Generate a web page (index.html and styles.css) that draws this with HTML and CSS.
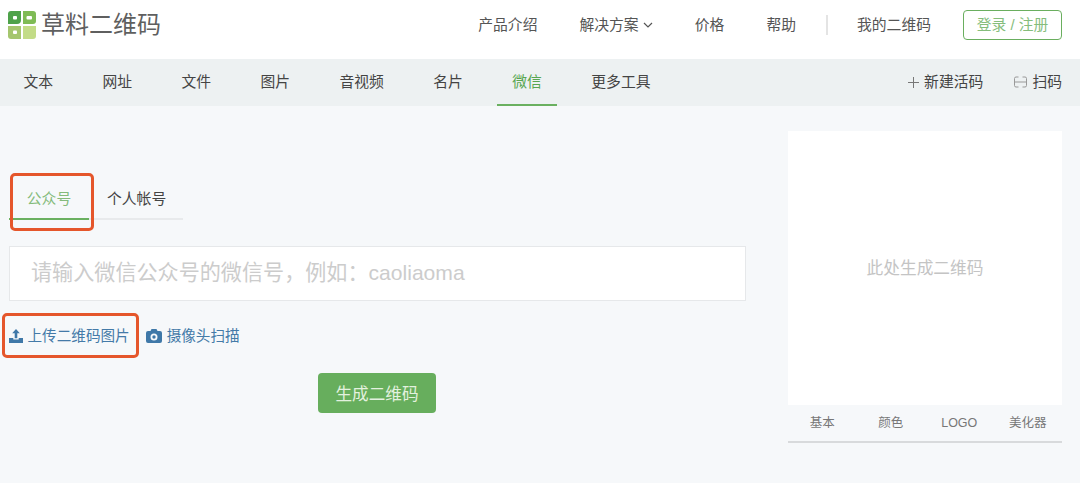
FILE: index.html
```html
<!DOCTYPE html>
<html lang="zh-CN">

<head>
  <meta charset="UTF-8">
  <title>草料二维码</title>
  <link rel="stylesheet" href="styles.css">
</head>

<body>

  <header class="topbar">
    <a class="logo" href="#">
      <svg class="logo-mark" width="28" height="28" viewBox="0 0 28 28">
        <path fill="#4ea24a" d="M3 0h10v9a4 4 0 0 1-4 4H0V3a3 3 0 0 1 3-3z" />
        <path fill="#7fbb55" d="M15 0h10a3 3 0 0 1 3 3v7a3 3 0 0 1-3 3h-10z" />
        <path fill="#a5c66e" d="M0 15h13v13H3a3 3 0 0 1-3-3z" />
        <path fill="#c3dc87" d="M15 15h13v10a3 3 0 0 1-3 3H15z" />
        <rect fill="#fff" x="5" y="5" width="4" height="3.500" rx="1" />
        <rect fill="#fff" x="18.500" y="5" width="5.500" height="3.500" rx="1" />
        <rect fill="#fff" x="5" y="19.500" width="4" height="3.500" rx="1" />
      </svg>
      <span class="logo-text">草料二维码</span>
    </a>
    <nav class="topnav">
      <a href="#">产品介绍</a>
      <a href="#">解决方案
        <svg class="caret" width="10" height="6" viewBox="0 0 10 6">
          <path d="M1 1l4 4 4-4" fill="none" stroke="#555" stroke-width="1.200" />
        </svg>
      </a>
      <a href="#">价格</a>
      <a href="#">帮助</a>
      <span class="divider"></span>
      <a href="#">我的二维码</a>
      <a class="login" href="#">登录 / 注册</a>
    </nav>
  </header>

  <div class="subbar">
    <nav class="subnav">
      <a href="#">文本</a>
      <a href="#">网址</a>
      <a href="#">文件</a>
      <a href="#">图片</a>
      <a href="#">音视频</a>
      <a href="#">名片</a>
      <a class="active" href="#">微信</a>
      <a href="#">更多工具</a>
    </nav>
    <div class="subtools">
      <a href="#">
        <svg width="11" height="11" viewBox="0 0 11 11">
          <path d="M5.500 0v11M0 5.500h11" stroke="#777" stroke-width="1" />
        </svg>
        新建活码
      </a>
      <a href="#">
        <svg width="13" height="12" viewBox="0 0 13 12">
          <path d="M4.500 1H2a1.500 1.500 0 0 0-1.500 1.500v7A1.500 1.500 0 0 0 2 11h2.500M8.500 1H11a1.500 1.500 0 0 1 1.500 1.500v7A1.500 1.500 0 0 1 11 11H8.500M0.500 6h12" fill="none" stroke="#999" stroke-width="1" />
        </svg>
        扫码
      </a>
    </div>
  </div>

  <main class="content">
    <section class="form-col">
      <div class="tabs">
        <a class="active" href="#">公众号</a>
        <a href="#">个人帐号</a>
      </div>
      <input class="wx-input" type="text" placeholder="请输入微信公众号的微信号，例如：caoliaoma">
      <div class="links">
        <a href="#">
          <svg width="14" height="14" viewBox="0 0 14 14">
            <path fill="#3f78a8" d="M7 0l3.800 4.200H8.300v5H5.700v-5H3.200zM0 9h4.300v1.600h5.400V9H14v5H0z" />
          </svg>
          上传二维码图片
        </a>
        <a href="#">
          <svg width="16" height="14" viewBox="0 0 16 14">
            <path fill="#3f78a8" fill-rule="evenodd" d="M2 2h2.500l1-2h5l1 2H14a2 2 0 0 1 2 2v8a2 2 0 0 1-2 2H2a2 2 0 0 1-2-2V4a2 2 0 0 1 2-2zm6 2.500a3.500 3.500 0 1 0 0 7 3.500 3.500 0 0 0 0-7zm0 1.800a1.700 1.700 0 1 1 0 3.400 1.700 1.700 0 0 1 0-3.400z" />
          </svg>
          摄像头扫描
        </a>
      </div>
      <button class="gen-btn" type="button">生成二维码</button>
    </section>

    <aside class="qr-col">
      <div class="qr-box">此处生成二维码</div>
      <div class="qr-tabs">
        <a href="#">基本</a>
        <a href="#">颜色</a>
        <a href="#">LOGO</a>
        <a href="#">美化器</a>
      </div>
    </aside>
  </main>

  <!-- red annotation boxes drawn over the page -->
  <div class="mark mark-tab"></div>
  <div class="mark mark-upload"></div>

</body>

</html>
```

FILE: styles.css
```css
* {
  box-sizing: border-box;
  margin: 0;
  padding: 0;
}

html,
body {
  height: 100%;
  overflow: hidden;
}

body {
  position: relative;
  font-family: "Liberation Sans", "Noto Sans CJK SC", sans-serif;
  font-size: 14.8px;
  line-height: 20px;
  background: #f6f8fa;
  color: #444;
}

a {
  color: inherit;
  text-decoration: none;
}

/* top bar */
.topbar {
  height: 59px;
  background: #fff;
  display: flex;
  align-items: center;
  justify-content: space-between;
  padding: 0 18px 9px 8px;
}

.logo {
  display: flex;
  align-items: center;
  gap: 5px;
}

.logo-text {
  font-size: 24px;
  color: #5f5f5f;
  line-height: 28px;
}

.topnav {
  display: flex;
  align-items: center;
  gap: 42px;
  color: #555;
}

.topnav .caret {
  vertical-align: 2px;
}

.divider {
  width: 2px;
  height: 20px;
  background: #e4e4e4;
  margin: 0 -13px 0 -12px;
}

.login {
  width: 99px;
  height: 30px;
  line-height: 28px;
  margin-left: -10px;
  text-align: center;
  border: 1px solid #6aae5f;
  border-radius: 4px;
  color: #85bd7c;
}

/* second bar */
.subbar {
  height: 47px;
  background: #edf1f2;
  display: flex;
  justify-content: space-between;
  padding: 0 18px 0 8.500px;
}

.subnav {
  display: flex;
  gap: 19.400px;
}

.subnav a {
  height: 47px;
  line-height: 46px;
  padding: 0 15px;
  color: #444;
}

.subnav a.active {
  color: #58a651;
  border-bottom: 2px solid #6ab060;
}

.subtools {
  display: flex;
  align-items: center;
  gap: 31px;
  padding-bottom: 2px;
  color: #444;
}

.subtools svg {
  margin-right: 1px;
  vertical-align: -1px;
}

/* main area */
.content {
  display: flex;
  justify-content: space-between;
  padding: 25px 18px 0 9px;
}

.form-col {
  width: 737px;
  display: flex;
  flex-direction: column;
  padding-top: 50px;
}

.tabs {
  display: flex;
  width: 174px;
  height: 39px;
  border-bottom: 2px solid #e8eaec;
  white-space: nowrap;
}

.tabs a {
  height: 39px;
  line-height: 36px;
  padding-left: 18px;
}

.tabs a.active {
  width: 80px;
  text-align: center;
  color: #84bb7b;
  padding: 0;
  border-bottom: 2px solid #6ab060;
}

.wx-input {
  height: 55px;
  margin-top: 26px;
  padding: 0 21px 2px;
  font-family: inherit;
  font-size: 21.100px;
  background: #fff;
  border: 1px solid #e6e8ea;
  outline: none;
}

.wx-input::placeholder {
  color: #ccc;
}

.links {
  display: flex;
  gap: 16.500px;
  margin-top: 25px;
  font-size: 14.600px;
  color: #447aa8;
}

.links a {
  display: flex;
  align-items: center;
  gap: 4.500px;
}

.gen-btn {
  align-self: center;
  width: 118px;
  height: 40px;
  margin-top: 27px;
  margin-left: -1px;
  border: none;
  border-radius: 4px;
  background: #67ae5d;
  color: #e3f1df;
  font-family: inherit;
  font-size: 16.600px;
}

.qr-col {
  width: 274px;
}

.qr-box {
  height: 274px;
  padding-top: 1px;
  background: #fff;
  color: #c4c4c4;
  font-size: 16.700px;
  display: flex;
  align-items: center;
  justify-content: center;
}

.qr-tabs {
  display: grid;
  grid-template-columns: repeat(4, 1fr);
  height: 38px;
  line-height: 37px;
  text-align: center;
  font-size: 12.500px;
  color: #777;
  border-bottom: 2px solid #d8dadc;
}

/* annotations */
.mark {
  position: absolute;
  border: 3px solid #e5562b;
  border-radius: 5px;
}

.mark-tab {
  left: 10px;
  top: 173px;
  width: 84px;
  height: 58px;
}

.mark-upload {
  left: 2px;
  top: 313px;
  width: 137px;
  height: 45px;
}
```
